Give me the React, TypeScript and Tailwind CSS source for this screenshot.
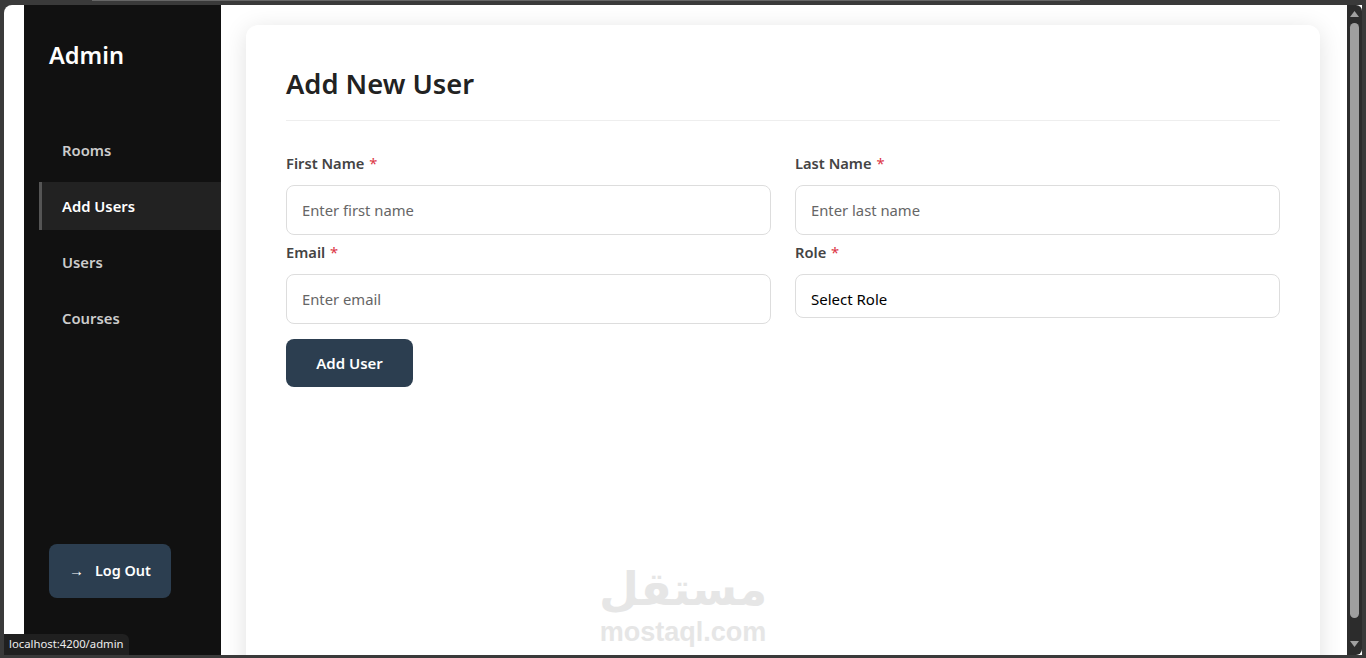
import React from 'react';

const navItems = ['Rooms', 'Add Users', 'Users', 'Courses'];

const Field: React.FC<{ label: string; placeholder: string }> = ({ label, placeholder }) => (
  <div>
    <label className="block h-[24px] mb-[9px] text-[14.7px] leading-[23px] font-semibold text-[#444]">
      {label} <span className="ml-[1px] font-normal text-[#dc3545]">*</span>
    </label>
    <input
      type="text"
      placeholder={placeholder}
      className="block w-full h-[50px] px-[15px] bg-white border border-[#ddd] rounded-lg text-[14.8px] outline-none placeholder:text-[#666]"
    />
  </div>
);

export default function App() {
  return (
    <div className="relative w-[1366px] h-[658px] overflow-hidden flex flex-col bg-[#3a3a3a] font-['Noto_Sans',sans-serif]">
      {/* Browser frame top edge */}
      <div className="h-[5px] shrink-0 pl-[92px] pr-[286px]">
        <div className="h-[1px] bg-[#666]" />
      </div>

      <div className="flex-1 min-h-0 flex pl-[4px] pr-[4px] pb-[3px]">
        <div className="flex-1 min-w-0 flex bg-white pl-[20px] rounded-tl-lg overflow-hidden">
          {/* Sidebar */}
          <aside className="w-[197px] shrink-0 bg-[#111] flex flex-col pb-[57px]">
            <h2 className="pl-[25px] pt-[31px] h-[97px] text-[23.6px] leading-[38px] font-semibold text-white">Admin</h2>
            <nav className="flex flex-col gap-[8px] pl-[15px] pt-[24px]">
              {navItems.map((item) => (
                <a
                  key={item}
                  className={`h-[48px] flex items-center pl-[20px] border-l-[3px] text-[14.8px] font-semibold ${
                    item === 'Add Users'
                      ? 'bg-[#222] border-[#555] text-white'
                      : 'border-transparent text-[#ccc]'
                  }`}
                >
                  {item}
                </a>
              ))}
            </nav>
            <button className="mt-auto ml-[25px] w-[122px] h-[54px] flex items-center pl-[20px] gap-[11px] bg-[#2c3e50] rounded-lg text-white text-[14.4px] font-semibold">
              <span className="font-['Liberation_Sans',sans-serif] font-normal text-[15px]">→</span>
              <span>Log Out</span>
            </button>
          </aside>

          {/* Main content */}
          <main className="relative flex-1 min-w-0 overflow-hidden pt-[20px] pl-[25px] pr-[27px]">
            <div className="h-[700px] bg-white rounded-xl shadow-[0_4px_25px_rgba(0,0,0,0.12)] px-[40px] pt-[40px]">
              <h1 className="pb-[17px] text-[27.3px] leading-[38px] font-semibold text-[#222] border-b border-[#eee]">
                Add New User
              </h1>
              <form className="pt-[31px]">
                <div className="grid grid-cols-2 gap-x-[24px] gap-y-[6px]">
                  <Field label="First Name" placeholder="Enter first name" />
                  <Field label="Last Name" placeholder="Enter last name" />
                  <Field label="Email" placeholder="Enter email" />
                  <div>
                    <label className="block h-[24px] mb-[9px] text-[14.7px] leading-[23px] font-semibold text-[#444]">
                      Role <span className="ml-[1px] font-normal text-[#dc3545]">*</span>
                    </label>
                    <div className="h-[44px] flex items-center px-[15px] pt-[6px] bg-white border border-[#ddd] rounded-lg text-[15px] text-black">
                      Select Role
                    </div>
                  </div>
                </div>
                <button type="button" className="mt-[15px] w-[127px] h-[48px] bg-[#2c3e50] rounded-lg text-white text-[15px] font-semibold">
                  Add User
                </button>
              </form>
            </div>
          </main>

          {/* Scrollbar */}
          <div className="w-[15px] shrink-0 bg-[#2c2c2c] flex flex-col items-center pt-[6px] pb-[8px] rounded-r-md">
            <svg width="9" height="6" viewBox="0 0 9 6" className="shrink-0">
              <path d="M4.5 0L9 6H0z" fill="#a0a0a0" />
            </svg>
            <div className="w-[9px] flex-1 mt-[6px] mb-[23px] bg-[#9f9f9f] rounded-full" />
            <svg width="9" height="6" viewBox="0 0 9 6" className="shrink-0">
              <path d="M0 0H9L4.5 6z" fill="#a0a0a0" />
            </svg>
          </div>
        </div>
      </div>

      {/* Watermark */}
      <div className="absolute left-[600px] top-[563px] w-[166px] flex flex-col items-center gap-[3px] text-[#e6e6e6] pointer-events-none">
        <span className="h-[52px] text-[46px] leading-[52px] font-bold font-['DejaVu_Sans',sans-serif]">مستقل</span>
        <span className="h-[28px] text-[27px] leading-[28px] font-bold font-['Liberation_Sans',sans-serif]">mostaql.com</span>
      </div>

      {/* Link status bubble */}
      <div className="absolute left-[4px] bottom-[3px] h-[21px] px-[5px] flex items-center bg-[#202020] rounded-tr-md text-[11.3px] text-[#eee]">
        localhost:4200/admin
      </div>
    </div>
  );
}
